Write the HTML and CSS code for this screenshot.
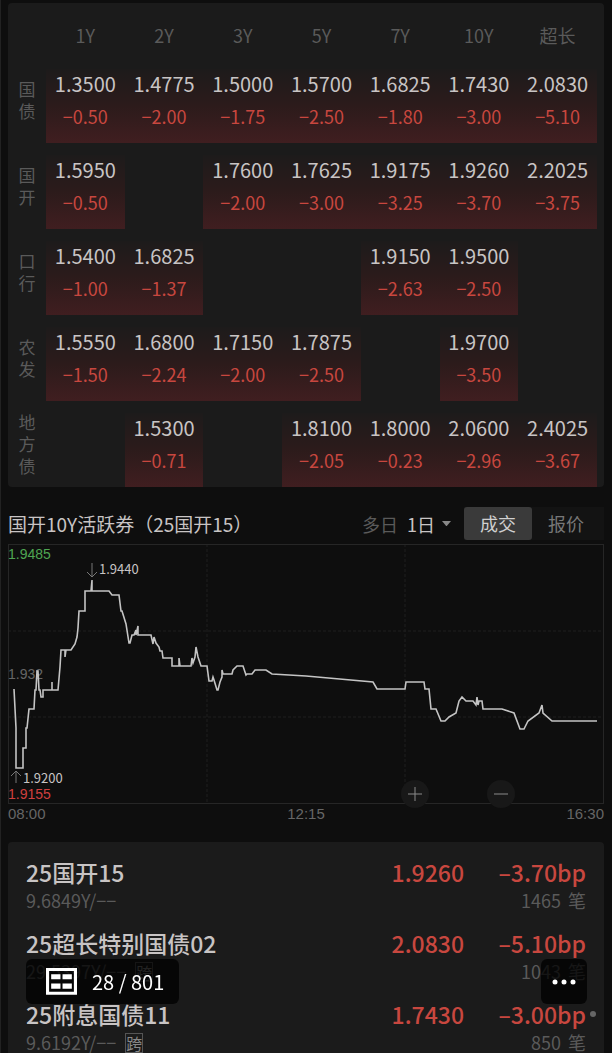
FILE: index.html
```html
<!DOCTYPE html>
<html lang="zh-CN">
<head>
  <meta charset="UTF-8" />
  <meta name="viewport" content="width=device-width, initial-scale=1.0"/>
  <title>国开10Y活跃券</title>
  <link rel="stylesheet" href="styles.css">
</head>
<body>
  <main class="page">
    <section class="card matrix">
      <table class="yields">
        <thead>
          <tr><td class="corner"></td><th>1Y</th><th>2Y</th><th>3Y</th><th>5Y</th><th>7Y</th><th>10Y</th><th>超长</th></tr>
        </thead>
        <tbody id="yield-rows"></tbody>
      </table>
    </section>

    <section class="active-bond">
      <div class="toolbar">
        <h2>国开10Y活跃券（25国开15）</h2>
        <div class="range">
          <label for="days">多日</label>
          <select id="days"><option>1日</option></select>
          <svg class="caret" viewBox="0 0 10 6"><path d="M0 0h10L5 6z"/></svg>
        </div>
        <div class="switch">
          <button class="switch-btn active" type="button">成交</button>
          <button class="switch-btn" type="button">报价</button>
        </div>
      </div>

      <div class="chart">
        <svg class="plot" viewBox="0 0 596 260">
          <path class="grid" d="M0 87H596M0 173H596M199 0V260M397 0V260"/>
          <rect class="frame" x="0.5" y="0.5" width="595" height="259"/>
          <text class="axis high" x="0" y="15">1.9485</text>
          <text class="axis mid" x="0" y="135">1.932</text>
          <text class="axis low" x="0" y="255">1.9155</text>
          <polyline class="line" points="6,145 8,184 8,224 15,224 15,204 18,204 18,184 19,184 21,165 26,165 27,146 28,146 29,127 30,127 31,146 32,146 33,153 35,153 35,146 44,146 44,138 44,146 50,146 52,123 53,106 57,106 57,113 58,106 63,106 67,100 69,93 70,84 71,67 77,67 77,47 83,47 84,36 84,47 101,47 104,51 111,51 113,67 114,67 118,80 121,99 122,99 124,91 126,91 128,86 128,91 130,82 130,91 143,91 145,100 146,93 148,99 151,103 152,107 154,107 155,114 164,114 164,122 171,122 171,114 172,122 183,122 184,114 185,119 187,113 188,103 190,113 193,122 199,122 201,137 204,137 205,133 206,136 209,146 210,146 212,138 214,133 214,126 215,130 224,130 225,126 229,122 235,122 238,131 239,130 244,130 247,126 258,126 264,130 298,132 365,138 369,145 397,145 398,138 416,138 417,145 421,145 423,165 428,165 433,177 437,177 441,173 448,169 451,157 454,153 458,157 465,157 468,161 469,153 470,161 471,157 474,157 475,165 494,165 506,169 512,185 516,185 520,177 531,169 534,161 535,169 544,177 589,177"/>
          <path class="arrow" d="M84 19V33M79 28L84 33L89 28"/>
          <text class="mark" x="91" y="30">1.9440</text>
          <path class="arrow" d="M8 239V227M3 232L8 227L13 232"/>
          <text class="mark" x="15" y="239">1.9200</text>
        </svg>
        <div class="zoom-btns">
          <button type="button" aria-label="放大"><svg viewBox="0 0 14 14"><path d="M0 7H14M7 0V14"/></svg></button>
          <button type="button" aria-label="缩小"><svg viewBox="0 0 14 14"><path d="M0 7H14"/></svg></button>
        </div>
      </div>
      <div class="times"><span>08:00</span><span>12:15</span><span>16:30</span></div>
    </section>

    <section class="card bonds" id="bonds"></section>
  </main>

  <button class="overlay pager" type="button">
    <svg viewBox="0 0 30 26"><path class="box" d="M1.5 1.5H28.5V24.5H1.5z"/><path class="cells" d="M5 6h9v5H5zM16 6h9v5h-9zM5 15h9v5H5zM16 15h9v5h-9z"/></svg>
    <span>28 / 801</span>
  </button>
  <button class="overlay more" type="button" aria-label="更多">
    <svg viewBox="0 0 24 6"><circle cx="3" cy="3" r="2.5"/><circle cx="12" cy="3" r="2.5"/><circle cx="21" cy="3" r="2.5"/></svg>
  </button>
  <i class="scroll-dot"></i>

<script>
  const yields = [
    ['国债', ['1.3500', '−0.50'], ['1.4775', '−2.00'], ['1.5000', '−1.75'], ['1.5700', '−2.50'], ['1.6825', '−1.80'], ['1.7430', '−3.00'], ['2.0830', '−5.10']],
    ['国开', ['1.5950', '−0.50'], null, ['1.7600', '−2.00'], ['1.7625', '−3.00'], ['1.9175', '−3.25'], ['1.9260', '−3.70'], ['2.2025', '−3.75']],
    ['口行', ['1.5400', '−1.00'], ['1.6825', '−1.37'], null, null, ['1.9150', '−2.63'], ['1.9500', '−2.50'], null],
    ['农发', ['1.5550', '−1.50'], ['1.6800', '−2.24'], ['1.7150', '−2.00'], ['1.7875', '−2.50'], null, ['1.9700', '−3.50'], null],
    ['地方债', null, ['1.5300', '−0.71'], null, ['1.8100', '−2.05'], ['1.8000', '−0.23'], ['2.0600', '−2.96'], ['2.4025', '−3.67']]
  ];

  const bonds = [
    { name: '25国开15', term: '9.6849Y/−−', cross: false, rate: '1.9260', bp: '–3.70bp', count: 1465 },
    { name: '25超长特别国债02', term: '29.5397Y/−−', cross: true, rate: '2.0830', bp: '–5.10bp', count: 1043 },
    { name: '25附息国债11', term: '9.6192Y/−−', cross: true, rate: '1.7430', bp: '–3.00bp', count: 850 }
  ];

  document.getElementById('yield-rows').innerHTML = yields.map(([label, ...cells]) => `
    <tr>
      <th><span class="row-label">${label}</span></th>
      ${cells.map(c => c ? `<td><div class="cell"><b>${c[0]}</b><span>${c[1]}</span></div></td>` : '<td></td>').join('')}
    </tr>`).join('');

  document.getElementById('bonds').innerHTML = bonds.map(b => `
    <article class="bond">
      <div class="main"><h3>${b.name}</h3><span class="rate">${b.rate}</span><span class="bp">${b.bp}</span></div>
      <div class="sub"><span>${b.term}</span>${b.cross ? '<em>跨</em>' : ''}<span class="count">${b.count}<span class="unit">笔</span></span></div>
    </article>`).join('');
</script>
</body>
</html>
```
FILE: styles.css
```css
:root {
  --bg: #0e0e0e;
  --surface: #1b1b1b;
  --fg: #c8c4c4;
  --subtle: #5a5a5a;
  --red: #c8473f;
  --line: #262626;
}

* {
  margin: 0;
  padding: 0;
  box-sizing: border-box;
}

body {
  height: 100vh;
  overflow: hidden;
  background: var(--bg);
  color: var(--fg);
  font-family: "Noto Sans CJK SC", sans-serif;
  box-shadow: inset 1px 0 #222;
}

button,
select {
  border: none;
  background: none;
  color: inherit;
  font: inherit;
  cursor: pointer;
}

.page {
  padding: 3px 8px 0;
}

.card {
  background: var(--surface);
  border-radius: 4px;
}

/* yield table */
.matrix {
  padding-right: 7px;
}

.yields {
  width: 100%;
  table-layout: fixed;
  border-collapse: collapse;
  text-align: center;
}

.yields .corner {
  width: 38px;
}

.yields thead th {
  height: 54px;
  padding-top: 10px;
  color: var(--subtle);
  font-size: 18px;
  font-weight: 400;
  line-height: 24px;
}

.yields tbody th {
  color: var(--subtle);
  font-size: 17px;
  font-weight: 400;
  line-height: 22px;
}

.row-label {
  display: block;
  width: 17px;
  margin: 0 auto;
  word-break: break-all;
}

.yields tbody td {
  height: 86px;
  padding-top: 12px;
  vertical-align: top;
}

.cell {
  display: flex;
  flex-direction: column;
  padding-bottom: 10px;
  background: linear-gradient(#1d1b1b, #2c1b1b 50%, #401e20);
}

.cell b {
  font-size: 20px;
  font-weight: 400;
  line-height: 30px;
}

.cell span {
  color: var(--red);
  font-size: 18px;
  line-height: 34px;
}

/* chart */
.toolbar {
  display: flex;
  align-items: center;
  padding: 20px 0 4px;
  font-size: 18px;
  line-height: 33px;
}

.toolbar h2 {
  flex: 1;
  font-size: 19px;
  font-weight: 400;
  line-height: 32px;
  white-space: nowrap;
}

.range {
  display: flex;
  align-items: center;
  margin-right: 13px;
  line-height: 32px;
}

.range label {
  margin-right: 9px;
  color: var(--subtle);
}

.range select {
  appearance: none;
  margin-right: 7px;
}

.caret {
  width: 9px;
  fill: #888;
}

.switch {
  display: flex;
  padding-right: 4px;
  background: #131313;
}

.switch-btn {
  width: 68px;
  border-radius: 3px;
  color: #777;
}

.switch-btn.active {
  background: #3a3a3a;
  color: #d0d0d0;
}

.chart {
  position: relative;
}

.plot {
  display: block;
  width: 100%;
}

.plot path,
.plot rect,
.plot polyline {
  fill: none;
}

.grid {
  stroke: #1f1f1f;
  stroke-dasharray: 3 2;
}

.frame {
  stroke: var(--line);
}

.plot .line {
  stroke: #c4c4c4;
  stroke-width: 1.6;
}

.arrow {
  stroke: #777;
}

.axis {
  font-family: "Liberation Sans", sans-serif;
  font-size: 14px;
}

.high {
  fill: #4fa552;
}

.mid {
  fill: #666;
}

.low {
  fill: #d0403f;
}

.mark {
  fill: var(--fg);
  font-size: 13px;
}

.zoom-btns {
  position: absolute;
  right: 89px;
  bottom: -4px;
  display: flex;
  gap: 58px;
}

.zoom-btns button {
  display: grid;
  place-items: center;
  width: 28px;
  height: 28px;
  border-radius: 50%;
  background: #181818;
}

.zoom-btns svg {
  width: 14px;
  stroke: #8a8a8a;
}

.times {
  display: flex;
  justify-content: space-between;
  color: #666;
  font: 15px/20px "Liberation Sans", sans-serif;
}

/* bond list */
.bonds {
  margin-top: 18px;
  padding: 15px 18px 0;
}

.bond {
  padding-bottom: 14px;
}

.main {
  display: flex;
  line-height: 30px;
  font-size: 23px;
  font-weight: 500;
}

.main h3 {
  flex: 1;
  font-size: 23px;
  font-weight: 500;
}

.rate,
.bp {
  color: var(--red);
  text-align: right;
}

.bp {
  width: 122px;
}

.sub {
  display: flex;
  align-items: center;
  gap: 9px;
  color: var(--subtle);
  font-size: 18px;
  line-height: 27px;
}

.sub em {
  border: 1px solid #555;
  color: #888;
  font-size: 16px;
  font-style: normal;
  line-height: 18px;
}

.sub .count {
  margin-left: auto;
}

.unit {
  margin-left: 7px;
}

/* floating controls */
.overlay {
  position: fixed;
  bottom: 49px;
  display: flex;
  align-items: center;
  justify-content: center;
  height: 45px;
  border-radius: 6px;
  background: rgba(0, 0, 0, 0.75);
  color: #fff;
}

.pager {
  left: 26px;
  gap: 15px;
  padding: 0 15px 0 20px;
  font-size: 20px;
}

.pager svg {
  width: 31px;
}

.pager .box {
  fill: none;
  stroke: #fff;
  stroke-width: 3;
}

.pager .cells,
.more svg {
  fill: #fff;
}

.more {
  right: 25px;
  width: 46px;
}

.more svg {
  width: 24px;
}

.scroll-dot {
  position: fixed;
  right: 16px;
  bottom: 36px;
  width: 6px;
  height: 6px;
  border-radius: 50%;
  background: #666;
}
```
